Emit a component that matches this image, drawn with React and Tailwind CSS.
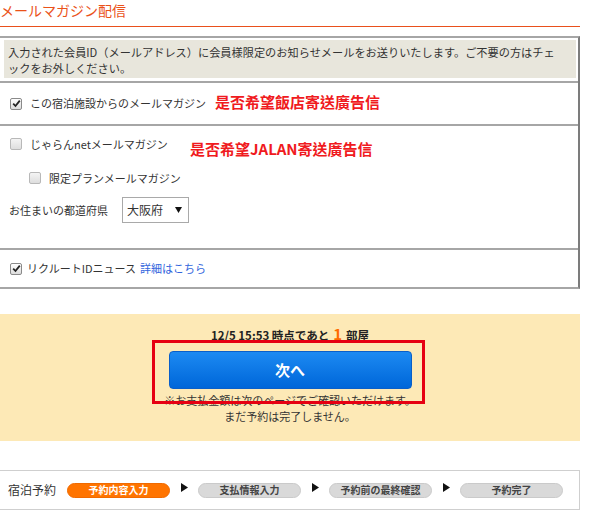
import React from "react";

const jp = { fontFamily: '"Noto Sans CJK JP", "Noto Sans", sans-serif' };
const tc = { fontFamily: '"Noto Sans CJK TC", "Noto Sans", sans-serif' };

function Check({ checked, className = "" }) {
  return (
    <span
      className={
        "inline-flex items-center justify-center w-[12px] h-[12px] rounded-[2px] border shrink-0 " +
        (checked
          ? "border-[#8a8a8a] bg-gradient-to-b from-[#ffffff] to-[#dcdcdc] "
          : "border-[#b8b8b8] bg-gradient-to-b from-[#f4f4f4] to-[#dedede] ") +
        className
      }
    >
      {checked && (
        <svg width="9" height="9" viewBox="0 0 9 9">
          <path d="M1.2 4.6 L3.5 7 L7.8 1.6" fill="none" stroke="#222" strokeWidth="1.8" />
        </svg>
      )}
    </span>
  );
}

function Arrow() {
  return (
    <svg width="7" height="9" viewBox="0 0 7 9" className="shrink-0 -mt-[5px]">
      <path d="M0 0 L7 4.5 L0 9 Z" fill="#111" />
    </svg>
  );
}

function Pill({ children, active }) {
  return (
    <span
      className={
        "flex items-center justify-center w-[103px] h-[15px] rounded-full border text-[10px] font-bold leading-none " +
        (active
          ? "bg-[#ff7400] border-[#f06a00] text-white"
          : "bg-[#d9d9d9] border-[#cacaca] text-[#444]")
      }
    >
      {children}
    </span>
  );
}

export default function App() {
  return (
    <div className="w-[599px] h-[525px] bg-white text-[#333] overflow-hidden" style={jp}>
      <div className="w-[580px]">
        {/* title */}
        <div className="h-[27px] border-b border-[#e9501c]">
          <h2 className="pt-[1px] text-[14px] leading-[18px] text-[#ea5219]">
            メールマガジン配信
          </h2>
        </div>

        {/* box */}
        <div className="mt-[9px] border-t-2 border-b-2 border-r-2 border-t-[#a6a6a6] border-b-[#a6a6a6] border-r-[#7c7c7c]">
          <div className="pl-[4px] pr-[2px] pt-[2px] pb-[3px]">
            <div className="bg-[#e8e6dc] pl-[4px] pt-[4px] pb-[2px] text-[11.2px] leading-[16px] text-[#333]">
              <div className="whitespace-nowrap">
                入力された会員ID（メールアドレス）に会員様限定のお知らせメールをお送りいたします。ご不要の方はチェ
              </div>
              <div className="whitespace-nowrap">ックをお外しください。</div>
            </div>
          </div>

          {/* row 1 */}
          <div className="border-t-2 border-[#a6a6a6] h-[43px] flex items-center pl-[10px]">
            <Check checked />
            <span className="ml-[8px] text-[11px] w-[185px] whitespace-nowrap">
              この宿泊施設からのメールマガジン
            </span>
            <span className="text-[15px] font-bold text-[#f01a20] whitespace-nowrap -mt-[2px]" style={tc}>
              是否希望飯店寄送廣告信
            </span>
          </div>

          {/* row 2 */}
          <div className="border-t-2 border-[#a6a6a6] h-[124px] pl-[9px] pt-[8px]">
            <div className="flex items-start h-[22px]">
              <div className="flex items-center h-[20px] w-[181px]">
                <Check className="ml-[1px]" />
                <span className="ml-[8px] text-[11px] whitespace-nowrap">じゃらんnetメールマガジン</span>
              </div>
              <span className="mt-[5px] text-[15px] font-bold leading-[20px] text-[#f01a20] whitespace-nowrap" style={tc}>
                是否希望JALAN寄送廣告信
              </span>
            </div>
            <div className="flex items-center h-[20px] mt-[12px] pl-[20px]">
              <Check />
              <span className="ml-[8px] text-[11px] whitespace-nowrap">限定プランメールマガジン</span>
            </div>
            <div className="flex items-center mt-[9px]">
              <span className="text-[11px] w-[113px] whitespace-nowrap">お住まいの都道府県</span>
              <div className="flex items-center justify-between w-[67px] h-[26px] border border-[#a9a9a9] bg-white pl-[4px] pr-[6px]">
                <span className="text-[12px]">大阪府</span>
                <svg width="7" height="6" viewBox="0 0 7 6">
                  <path d="M0 0 L7 0 L3.5 6 Z" fill="#111" />
                </svg>
              </div>
            </div>
          </div>

          {/* row 3 */}
          <div className="border-t-2 border-[#a6a6a6] h-[39px] flex items-center pl-[10px]">
            <Check checked />
            <span className="ml-[5px] text-[11px] whitespace-nowrap">リクルートIDニュース</span>
            <span className="ml-[4px] text-[11px] text-[#3366dd] whitespace-nowrap">詳細はこちら</span>
          </div>
        </div>

        {/* yellow */}
        <div className="relative mt-[25px] h-[127px] bg-[#fde9b6] flex flex-col items-center">
          <div className="mt-[11px] h-[18px] flex items-end text-[11.5px] font-bold leading-[16px] text-[#222]">
            <span>12/5 15:53 時点であと</span>
            <span className="mx-[4px] text-[15px] leading-[18px] text-[#ff6a00]">1</span>
            <span>部屋</span>
          </div>
          <button className="mt-[8px] w-[243px] h-[38px] rounded-[4px] border border-[#0a5fc9] bg-gradient-to-b from-[#1c8af2] to-[#0066d9] text-white text-[15px] font-bold">
            次へ
          </button>
          <div className="mt-[3px] text-center text-[11px] leading-[16px] text-[#333]">
            <div className="whitespace-nowrap">※お支払金額は次のページでご確認いただけます。</div>
            <div className="whitespace-nowrap">まだ予約は完了しません。</div>
          </div>
          <div className="absolute left-[152px] top-[26px] w-[273px] h-[64px] border-[3px] border-[#e60012]" />
        </div>

        {/* bottom bar */}
        <div className="mt-[29px] h-[40px] border-t border-b border-r border-[#cfcfcf] flex items-center pl-[8px]">
          <span className="text-[12px] w-[59px] whitespace-nowrap">宿泊予約</span>
          <Pill active>予約内容入力</Pill>
          <span className="w-[28px] flex justify-center"><Arrow /></span>
          <Pill>支払情報入力</Pill>
          <span className="w-[28px] flex justify-center"><Arrow /></span>
          <Pill>予約前の最終確認</Pill>
          <span className="w-[28px] flex justify-center"><Arrow /></span>
          <Pill>予約完了</Pill>
        </div>
      </div>
    </div>
  );
}
